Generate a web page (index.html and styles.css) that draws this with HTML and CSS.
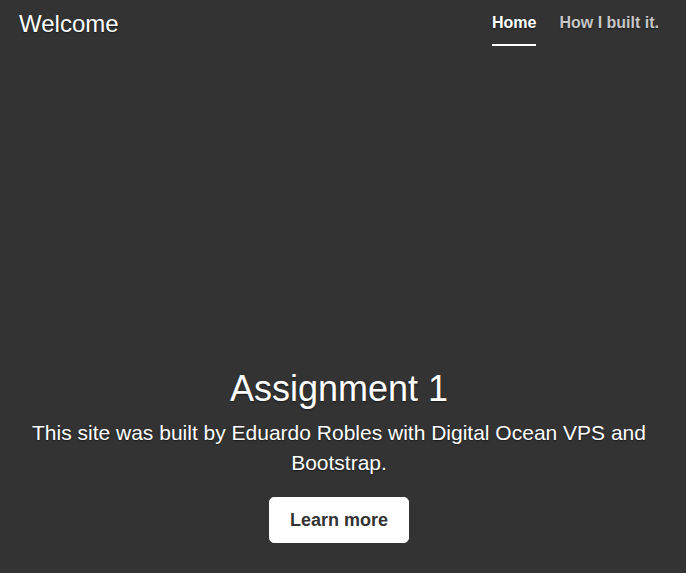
FILE: index.html
```html
<!DOCTYPE html>
<html lang="en">
<head>
<meta charset="utf-8">
<title>Welcome</title>
<link rel="stylesheet" href="styles.css">
</head>
<body>
<div class="cover">
  <header class="masthead">
    <h3 class="brand">Welcome</h3>
    <nav class="nav">
      <a class="nav-link active" href="#">Home</a>
      <a class="nav-link" href="#">How I built it.</a>
    </nav>
  </header>
  <main class="inner">
    <h1 class="cover-heading">Assignment 1</h1>
    <p class="lead">This site was built by Eduardo Robles with Digital Ocean VPS and Bootstrap.</p>
    <p class="lead-btn"><a href="#" class="btn">Learn more</a></p>
  </main>
</div>
</body>
</html>
```
FILE: styles.css
```css
html, body {
  height: 100%;
}
body {
  margin: 0;
  background: #333;
  color: #fff;
  font-family: "Liberation Sans", Arial, sans-serif;
  text-shadow: 0 0.05rem 0.1rem rgba(0, 0, 0, 0.5);
}
.cover {
  height: 100%;
  box-sizing: border-box;
  display: flex;
  flex-direction: column;
  padding: 7px 27px 30px 19px;
}
.masthead {
  display: flex;
  justify-content: space-between;
  align-items: flex-start;
}
.brand {
  margin: 3px 0 0 0;
  font-size: 24px;
  font-weight: 400;
  line-height: 1.2;
}
.nav {
  display: flex;
}
.nav-link {
  display: block;
  padding: 4px 0 9px;
  font-size: 16px;
  line-height: 24px;
  font-weight: 700;
  color: rgba(255, 255, 255, 0.75);
  text-decoration: none;
  border-bottom: 2px solid transparent;
}
.nav-link + .nav-link {
  margin-left: 23px;
}
.nav-link.active {
  color: #fff;
  border-bottom-color: #fff;
}
.inner {
  margin-top: auto;
  text-align: center;
}
.cover-heading {
  margin: 0 0 8px;
  font-size: 36px;
  font-weight: 400;
  line-height: 1.2;
}
.lead {
  margin: 0 0 19px;
  font-size: 21px;
  line-height: 30px;
}
.lead-btn {
  margin: 0;
}
.btn {
  display: inline-block;
  padding: 8px 20px;
  font-size: 18px;
  line-height: 28px;
  font-weight: 700;
  color: #333;
  background: #fff;
  border: 1px solid #fff;
  border-radius: 5px;
  text-decoration: none;
  text-shadow: none;
}
```
